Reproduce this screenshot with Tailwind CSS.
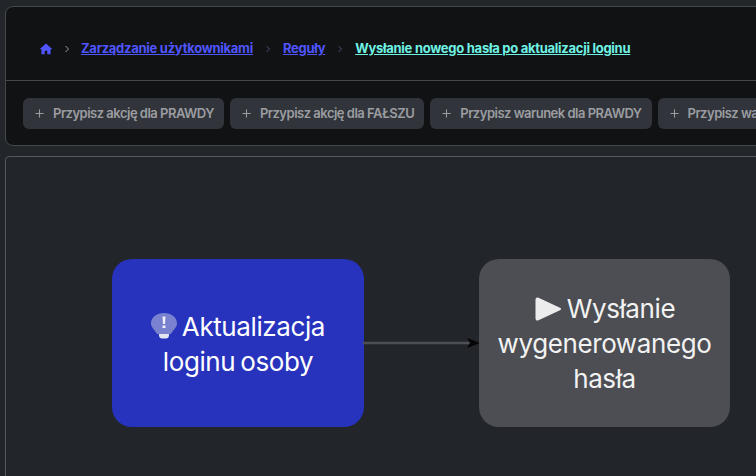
<!DOCTYPE html>
<html lang="pl">
<head>
    <meta charset="UTF-8">
    <title>Reguły</title>
    <script src="https://cdn.jsdelivr.net/npm/@tailwindcss/browser@4"></script>
</head>
<body class="bg-[#22252a] h-[476px] w-[756px] overflow-hidden font-['Inter',sans-serif]">
    <div class="pt-[6px] pl-[5px] w-[800px]">
        <!-- Top card -->
        <div class="h-[140px] bg-[#111214] border border-[#46484c] rounded-lg">
            <nav class="h-[74px] pt-[10px] flex items-center pl-[33px] border-b border-[#46484c] text-[13px] font-bold tracking-[-0.27px] text-[#4f55ff]">
                <svg class="w-[14px] h-[14px] mr-[9px]" viewBox="0 0 24 24" fill="#4f55ff"><path d="M12 2.500 1 12.500h3.200V21h5.600v-6h4.400v6h5.600v-8.500H23z"/></svg>
                <svg class="w-[10px] h-[10px] mr-[9px]" viewBox="0 0 10 10" fill="none" stroke="#9a9ca0" stroke-width="1"><path d="M3.500 2 6.500 5l-3 3"/></svg>
                <a class="underline" href="#">Zarządzanie użytkownikami</a>
                <svg class="w-[10px] h-[10px] mx-[10px]" viewBox="0 0 10 10" fill="none" stroke="#4a4d70" stroke-width="1"><path d="M3.500 2 6.500 5l-3 3"/></svg>
                <a class="underline" href="#">Reguły</a>
                <svg class="w-[10px] h-[10px] mx-[10px]" viewBox="0 0 10 10" fill="none" stroke="#4a4d70" stroke-width="1"><path d="M3.500 2 6.500 5l-3 3"/></svg>
                <a class="underline text-[#6ff2e4]" href="#">Wysłanie nowego hasła po aktualizacji loginu</a>
            </nav>
            <div class="flex gap-[6px] pl-[17px] pt-[17px] text-[13px] font-semibold tracking-[-0.5px] text-[#9b9da1] whitespace-nowrap">
                <button class="h-[31px] pl-[12px] pr-[10px] flex items-center gap-[9px] bg-[#31343a] rounded-md">
                    <svg class="w-[9px] h-[9px]" viewBox="0 0 10 10" stroke="#9b9da1" stroke-width="1.200"><path d="M5 .5v9M.5 5h9"/></svg>
                    Przypisz akcję dla PRAWDY
                </button>
                <button class="h-[31px] pl-[12px] pr-[10px] flex items-center gap-[9px] bg-[#31343a] rounded-md">
                    <svg class="w-[9px] h-[9px]" viewBox="0 0 10 10" stroke="#9b9da1" stroke-width="1.200"><path d="M5 .5v9M.5 5h9"/></svg>
                    Przypisz akcję dla FAŁSZU
                </button>
                <button class="h-[31px] pl-[12px] pr-[10px] flex items-center gap-[9px] bg-[#31343a] rounded-md">
                    <svg class="w-[9px] h-[9px]" viewBox="0 0 10 10" stroke="#9b9da1" stroke-width="1.200"><path d="M5 .5v9M.5 5h9"/></svg>
                    Przypisz warunek dla PRAWDY
                </button>
                <button class="h-[31px] pl-[12px] pr-[10px] flex items-center gap-[9px] bg-[#31343a] rounded-md">
                    <svg class="w-[9px] h-[9px]" viewBox="0 0 10 10" stroke="#9b9da1" stroke-width="1.200"><path d="M5 .5v9M.5 5h9"/></svg>
                    Przypisz warunek dla FAŁSZU
                </button>
            </div>
        </div>

        <!-- Diagram canvas -->
        <div class="relative mt-[10px] h-[400px] bg-[#22252a] border border-[#56585c] rounded-sm">
            <div class="absolute left-[106px] top-[102px] w-[252px] h-[168px] px-4 pt-[1px] flex items-center justify-center text-center bg-[#2733bc] rounded-[20px] text-white text-[26px] tracking-[-0.4px] [word-spacing:-2px] leading-[35px]">
                <div>
                    <svg class="inline-block w-[26px] h-[26px] align-[-3px]" viewBox="0 0 26 26">
                        <path d="M13 0C5.500 0 0 4.600 0 10.500c0 4.300 4 6.300 6 10.500h14c2-4.200 6-6.200 6-10.500C26 4.600 20.500 0 13 0z" fill="#7a82cf"/>
                        <path d="M8 21h10v1.500c0 2-1.500 3-3 3h-4c-1.500 0-3-1-3-3z" fill="#e3e4ee"/>
                        <path d="M11.500 3.500h3l-.5 7.500h-2zM11.500 12.500h3v2.500h-3z" fill="#f0f0f6"/>
                    </svg>
                    Aktualizacja<br>loginu osoby
                </div>
            </div>
            <svg class="absolute left-[357px] top-[178px]" width="120" height="16" viewBox="0 0 120 16">
                <path d="M0 8h108" stroke="#4d4f54" stroke-width="2.500"/>
                <path d="M104 3 117 8l-13 5 3-5z" fill="#050505"/>
            </svg>
            <div class="absolute left-[473px] top-[102px] w-[251px] h-[168px] px-2 pt-[1px] flex items-center justify-center text-center bg-[#4c4e53] rounded-[20px] text-[#f2f2f2] text-[26px] tracking-[-0.4px] [word-spacing:-2px] leading-[35px]">
                <div>
                    <svg class="inline-block w-[28px] h-[24px] align-[-3px]" viewBox="0 0 27 24">
                        <path d="M1 2.500C1 .8 2.500 0 4 .7l21.500 10c1.400.6 1.400 2 0 2.600L4 23.300c-1.500.7-3-.1-3-1.800z" fill="#ececec"/>
                    </svg>
                    Wysłanie<br>wygenerowanego<br>hasła
                </div>
            </div>
        </div>
    </div>
</body>
</html>
